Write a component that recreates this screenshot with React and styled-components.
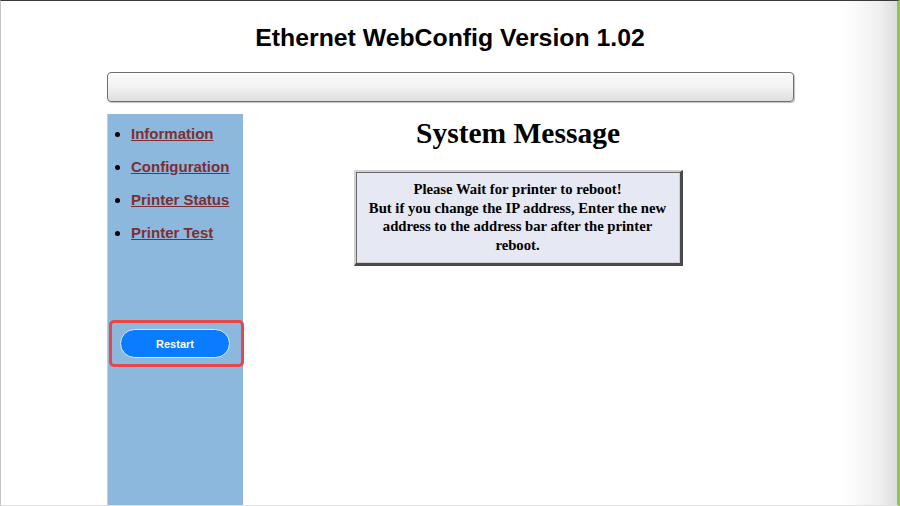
import React from "react";
import styled, { createGlobalStyle } from "styled-components";

const GlobalStyle = createGlobalStyle`
  html, body {
    margin: 0;
    padding: 0;
    background: #ffffff;
  }
`;

const links = ["Information", "Configuration", "Printer Status", "Printer Test"];

export default function App() {
  return (
    <>
      <GlobalStyle />
      <Frame>
        <Title>Ethernet WebConfig Version 1.02</Title>
        <Bar />
        <Body>
          <Sidebar>
            <Menu>
              {links.map((name) => (
                <li key={name}>
                  <a href="#">{name}</a>
                </li>
              ))}
            </Menu>
            <RestartBox>
              <RestartButton>Restart</RestartButton>
            </RestartBox>
          </Sidebar>
          <Main>
            <Heading>System Message</Heading>
            <MessageBox>
              Please Wait for printer to reboot!
              <br />
              But if you change the IP address, Enter the new address to the
              address bar after the printer reboot.
            </MessageBox>
          </Main>
        </Body>
      </Frame>
    </>
  );
}

const Frame = styled.div`
  box-sizing: border-box;
  width: 900px;
  height: 506px;
  overflow: hidden;
  display: flex;
  flex-direction: column;
  border-top: 1px solid #3a3a3a;
  border-left: 1px solid #c4c4c8;
  border-right: 3px solid #8cc84b;
  border-bottom: 1px solid #e2e2e2;
  background: linear-gradient(
    to right,
    #ffffff 0%,
    #ffffff 94%,
    #f0f0f0 98%,
    #dcdcdc 100%
  );
`;

const Title = styled.h1`
  margin: 0;
  height: 71px;
  display: flex;
  align-items: center;
  justify-content: center;
  padding: 2px 0 0 2px;
  box-sizing: border-box;
  font-family: "Liberation Sans", Arial, sans-serif;
  font-size: 24.8px;
  font-weight: bold;
  color: #000;
`;

const Bar = styled.div`
  box-sizing: border-box;
  margin-left: 106px;
  width: 687px;
  height: 30px;
  border: 1px solid #6e6e6e;
  border-radius: 4px;
  background: linear-gradient(to bottom, #fbfbfb 0%, #f2f2f2 50%, #dedede 100%);
  box-shadow: inset 0 1px 1px #ffffff, 1px 1px 1px rgba(0, 0, 0, 0.25);
`;

const Body = styled.div`
  flex: 1;
  display: flex;
  margin-top: 12px;
  padding-left: 106px;
`;

const Sidebar = styled.div`
  box-sizing: border-box;
  width: 136px;
  background: #8cb8de;
  border-left: 1px solid #b4d0ea;
  display: flex;
  flex-direction: column;
`;

const Menu = styled.ul`
  margin: 0;
  padding: 11px 0 0 23px;
  list-style: disc;
  font-family: "Liberation Sans", Arial, sans-serif;
  font-size: 15px;
  font-weight: bold;
  line-height: 18px;

  li {
    margin-bottom: 15px;
    color: #000;
  }

  a {
    color: #7e2e31;
    text-decoration: underline;
  }
`;

const RestartBox = styled.div`
  box-sizing: border-box;
  margin: 63px 0 0 1px;
  width: 135px;
  height: 47px;
  border: 3px solid #ec4545;
  border-radius: 5px;
  display: flex;
  align-items: center;
  padding-left: 8px;
`;

const RestartButton = styled.button`
  box-sizing: border-box;
  width: 110px;
  height: 29px;
  border: 1px solid #dfeaf7;
  border-radius: 15px;
  background: #0a7cff;
  color: #ffffff;
  font-family: "Liberation Sans", Arial, sans-serif;
  font-size: 11px;
  font-weight: bold;
  cursor: pointer;
`;

const Main = styled.div`
  width: 550px;
  display: flex;
  flex-direction: column;
  align-items: center;
`;

const Heading = styled.h2`
  margin: 3px 0 0 0;
  font-family: "Liberation Serif", "Times New Roman", serif;
  font-size: 29.5px;
  font-weight: bold;
  line-height: 33px;
  color: #000;
`;

const MessageBox = styled.div`
  box-sizing: border-box;
  margin-top: 20px;
  width: 329px;
  height: 96px;
  padding: 8px 10px 0;
  background: #e6e8f3;
  border-style: solid;
  border-width: 2px 3px 3px 2px;
  border-color: #d2d2d2 #4a4a4a #4a4a4a #d2d2d2;
  box-shadow: inset 1px 1px 0 #6a6a6a, inset -1px -1px 0 #cfcfcf;
  font-family: "Liberation Serif", "Times New Roman", serif;
  font-size: 14.7px;
  font-weight: bold;
  line-height: 18.5px;
  text-align: center;
  color: #000;
`;
